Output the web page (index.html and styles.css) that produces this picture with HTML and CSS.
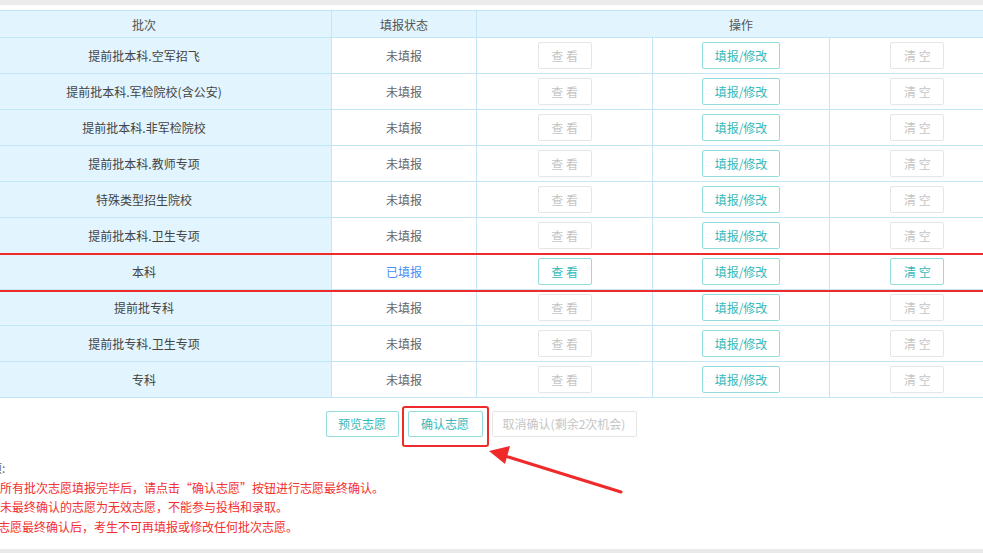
FILE: index.html
```html
<!DOCTYPE html>
<html lang="zh">
<head>
<meta charset="utf-8">
<title>志愿填报</title>
<link rel="stylesheet" href="styles.css">
</head>
<body>
<div class="topbar"></div>
<div class="main">
  <div class="tablewrap">
    <table class="grid">
      <thead>
        <tr><th class="c1">批次</th><th class="c2">填报状态</th><th colspan="3">操作</th></tr>
      </thead>
      <tbody>
        <tr><td class="c1">提前批本科.空军招飞</td><td class="c2">未填报</td><td class="c3"><span class="btn off w54">查 看</span></td><td class="c4"><span class="btn on w78">填报/修改</span></td><td class="c5"><span class="btn off w54">清 空</span></td></tr>
        <tr><td class="c1">提前批本科.军检院校(含公安)</td><td class="c2">未填报</td><td><span class="btn off w54">查 看</span></td><td><span class="btn on w78">填报/修改</span></td><td><span class="btn off w54">清 空</span></td></tr>
        <tr><td class="c1">提前批本科.非军检院校</td><td class="c2">未填报</td><td><span class="btn off w54">查 看</span></td><td><span class="btn on w78">填报/修改</span></td><td><span class="btn off w54">清 空</span></td></tr>
        <tr><td class="c1">提前批本科.教师专项</td><td class="c2">未填报</td><td><span class="btn off w54">查 看</span></td><td><span class="btn on w78">填报/修改</span></td><td><span class="btn off w54">清 空</span></td></tr>
        <tr><td class="c1">特殊类型招生院校</td><td class="c2">未填报</td><td><span class="btn off w54">查 看</span></td><td><span class="btn on w78">填报/修改</span></td><td><span class="btn off w54">清 空</span></td></tr>
        <tr><td class="c1">提前批本科.卫生专项</td><td class="c2">未填报</td><td><span class="btn off w54">查 看</span></td><td><span class="btn on w78">填报/修改</span></td><td><span class="btn off w54">清 空</span></td></tr>
        <tr><td class="c1">本科</td><td class="c2 done">已填报</td><td><span class="btn on w54">查 看</span></td><td><span class="btn on w78">填报/修改</span></td><td><span class="btn on w54">清 空</span></td></tr>
        <tr><td class="c1">提前批专科</td><td class="c2">未填报</td><td><span class="btn off w54">查 看</span></td><td><span class="btn on w78">填报/修改</span></td><td><span class="btn off w54">清 空</span></td></tr>
        <tr><td class="c1">提前批专科.卫生专项</td><td class="c2">未填报</td><td><span class="btn off w54">查 看</span></td><td><span class="btn on w78">填报/修改</span></td><td><span class="btn off w54">清 空</span></td></tr>
        <tr><td class="c1">专科</td><td class="c2">未填报</td><td><span class="btn off w54">查 看</span></td><td><span class="btn on w78">填报/修改</span></td><td><span class="btn off w54">清 空</span></td></tr>
      </tbody>
    </table>
    <div class="row-mark"></div>
  </div>

  <div class="actions">
    <span class="btn on big w73">预览志愿</span>
    <span class="confirm-wrap"><span class="btn on big w75">确认志愿</span><span class="confirm-mark"></span></span>
    <span class="btn off big w145">取消确认(剩余2次机会)</span>
  </div>

  <div class="notes">
    <p class="title">注意事项:</p>
    <p>1.所有批次志愿填报完毕后，请点击“确认志愿”按钮进行志愿最终确认。</p>
    <p>2.未最终确认的志愿为无效志愿，不能参与投档和录取。</p>
    <p class="l3">3.志愿最终确认后，考生不可再填报或修改任何批次志愿。</p>
  </div>

  <svg class="arrow" width="983" height="553" viewBox="0 0 983 553">
    <line x1="621" y1="492" x2="505" y2="456" stroke="#f02a2a" stroke-width="3" stroke-linecap="round"/>
    <polygon points="489,451 510,446 505,464" fill="#f02a2a"/>
  </svg>
</div>
<div class="bottombar"></div>
</body>
</html>
```

FILE: styles.css
```css
html, body {
  margin: 0;
  padding: 0;
}
body {
  width: 983px;
  height: 553px;
  overflow: hidden;
  background: #fff;
  font-family: "Noto Sans CJK SC", "Noto Sans", sans-serif;
  font-size: 12px;
  color: #444;
  display: flex;
  flex-direction: column;
}
.topbar {
  height: 5px;
  background: #ececec;
  flex: none;
}
.main {
  flex: 1;
  position: relative;
  padding-top: 5px;
}
.bottombar {
  height: 4px;
  background: #e9e9e9;
  flex: none;
}
.tablewrap {
  position: relative;
  width: 1050px;
  margin-left: -44px;
}
.grid {
  width: 1050px;
  border-collapse: collapse;
  table-layout: fixed;
}
.grid th, .grid td {
  border: 1px solid #c3e6f7;
  padding: 0;
  text-align: center;
  vertical-align: middle;
  font-weight: normal;
}
.grid thead tr { height: 27px; }
.grid tbody tr { height: 36px; }
.grid th {
  background: #e2f4fd;
  color: #555;
}
.grid td.c1 {
  background: #e2f4fd;
  color: #444;
}
.grid th.c1, .grid td.c1 { width: 374px; }
.grid th.c2, .grid td.c2 { width: 144px; }
.grid td.c3 { width: 176px; }
.grid td.c4 { width: 177px; }
.grid td.c5 { width: 179px; }
.grid td.c2 { color: #666; }
.grid td.c2.done { color: #4b8df5; }

.btn {
  display: inline-block;
  box-sizing: border-box;
  height: 27px;
  line-height: 25px;
  border: 1px solid #e3e3e3;
  border-radius: 2px;
  text-align: center;
  vertical-align: middle;
  white-space: nowrap;
}
.btn.on {
  border-color: #93dcdc;
  color: #35b9b9;
}
.btn.off {
  border-color: #e6e6e6;
  color: #c5c5c5;
}
.w54 { width: 54px; }
.w78 { width: 78px; }
.w73 { width: 73px; }
.w75 { width: 75px; }
.w145 { width: 145px; }
.btn.big { height: 26px; line-height: 24px; }

.row-mark {
  position: absolute;
  left: 0;
  right: 0;
  top: 243px;
  height: 39px;
  border-top: 2px solid #ee2a2a;
  border-bottom: 2px solid #ee2a2a;
  box-sizing: border-box;
  pointer-events: none;
}

.actions {
  display: flex;
  justify-content: center;
  gap: 9px;
  width: 1050px;
  margin-left: -44px;
  margin-top: 13px;
}
.confirm-wrap {
  position: relative;
  display: inline-block;
}
.confirm-mark {
  position: absolute;
  left: -6px;
  top: -5px;
  width: 87px;
  height: 41px;
  border: 2px solid #ee2a2a;
  border-radius: 3px;
  box-sizing: border-box;
}

.notes {
  margin-top: 21px;
  margin-left: -10px;
  color: #f23030;
  line-height: 19.5px;
}
.notes p {
  margin: 0;
}
.notes .title {
  color: #666;
  margin-left: -36px;
}
.notes .l3 { margin-left: -2px; }

.arrow {
  position: absolute;
  left: 0;
  top: -5px;
  pointer-events: none;
}
```
